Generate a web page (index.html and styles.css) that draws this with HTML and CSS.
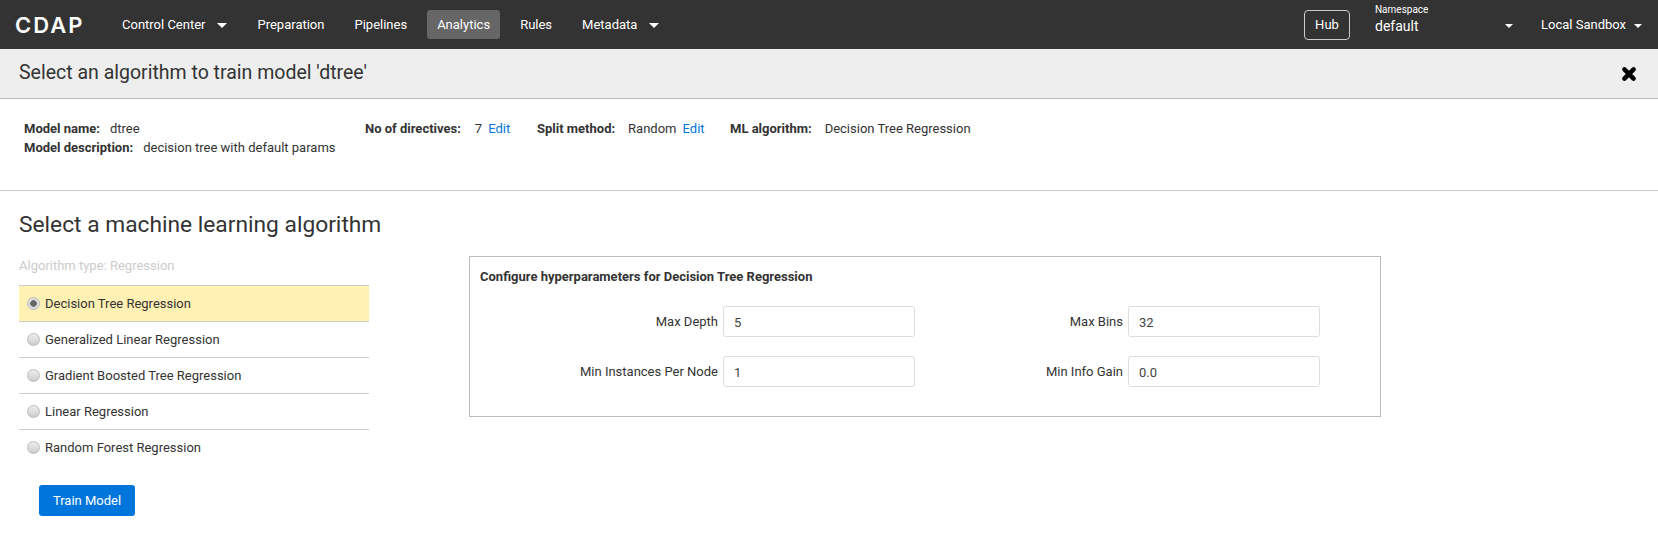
FILE: index.html
```html
<!DOCTYPE html>
<html lang="en">
<head>
  <meta charset="UTF-8">
  <title>CDAP - Analytics</title>
  <link rel="stylesheet" href="styles.css">
</head>
<body>

  <nav class="topbar">
    <span class="logo">CDAP</span>
    <ul class="nav-links">
      <li><a href="#">Control Center<i class="caret caret-wide"></i></a></li>
      <li><a href="#">Preparation</a></li>
      <li><a href="#">Pipelines</a></li>
      <li><a href="#" class="active">Analytics</a></li>
      <li><a href="#">Rules</a></li>
      <li><a href="#">Metadata<i class="caret caret-wide"></i></a></li>
    </ul>
    <a href="#" class="hub">Hub</a>
    <div class="namespace">
      <small>Namespace</small>
      <span>default</span>
      <i class="caret"></i>
    </div>
    <a href="#" class="sandbox">Local Sandbox<i class="caret"></i></a>
  </nav>

  <header class="subheader">
    <h1>Select an algorithm to train model 'dtree'</h1>
    <svg class="close" viewBox="0 0 14 14" aria-label="Close">
      <path d="M3 3 L11 11 M11 3 L3 11" stroke="#000" stroke-width="4" stroke-linecap="round" />
    </svg>
  </header>

  <section class="summary">
    <div class="summary-model">
      <p><b>Model name:</b><span class="val-name">dtree</span></p>
      <p><b>Model description:</b><span class="val-desc">decision tree with default params</span></p>
    </div>
    <p class="summary-directives"><b>No of directives:</b><span class="val-count">7</span><a href="#">Edit</a></p>
    <p class="summary-split"><b>Split method:</b><span class="val-split">Random</span><a href="#">Edit</a></p>
    <p class="summary-algo"><b>ML algorithm:</b><span class="val-algo">Decision Tree Regression</span></p>
  </section>

  <main class="content">
    <h2>Select a machine learning algorithm</h2>
    <div class="columns">
      <div class="algorithms">
        <div class="algo-type">Algorithm type: Regression</div>
        <ul class="algo-list">
          <li class="selected"><i class="radio"></i>Decision Tree Regression</li>
          <li><i class="radio"></i>Generalized Linear Regression</li>
          <li><i class="radio"></i>Gradient Boosted Tree Regression</li>
          <li><i class="radio"></i>Linear Regression</li>
          <li><i class="radio"></i>Random Forest Regression</li>
        </ul>
        <button class="train">Train Model</button>
      </div>

      <div class="params">
        <strong>Configure hyperparameters for Decision Tree Regression</strong>
        <div class="param-grid">
          <label class="param">Max Depth<input type="text" value="5"></label>
          <label class="param">Max Bins<input type="text" value="32"></label>
          <label class="param">Min Instances Per Node<input type="text" value="1"></label>
          <label class="param">Min Info Gain<input type="text" value="0.0"></label>
        </div>
      </div>
    </div>
  </main>

</body>
</html>
```

FILE: styles.css
```css
* {
  box-sizing: border-box;
}
html, body {
  height: 100%;
}
body {
  margin: 0;
  background: #fff;
  color: #333;
  font-family: Roboto, sans-serif;
  font-size: 13px;
  overflow: hidden;
}
a {
  text-decoration: none;
}
p, ul, h1, h2 {
  margin: 0;
  padding: 0;
}
ul {
  list-style: none;
}

/* top bar */
.topbar {
  display: flex;
  align-items: center;
  height: 49px;
  padding-left: 15px;
  background: #333;
  color: #fff;
}
.logo {
  width: 97px;
  font-family: Inter, sans-serif;
  font-size: 22px;
  font-weight: 600;
  letter-spacing: 2px;
}
.nav-links {
  display: flex;
  align-items: center;
}
.nav-links a {
  display: block;
  padding: 0 10px;
  margin-right: 10px;
  height: 29px;
  line-height: 29px;
  color: #fff;
  border-radius: 3px;
  font-size: 13px;
}
.nav-links a.active {
  background: #666;
}
.caret {
  display: inline-block;
  width: 0;
  height: 0;
  margin-left: 8px;
  vertical-align: middle;
  border-left: 4px solid transparent;
  border-right: 4px solid transparent;
  border-top: 4px solid #fff;
}
.caret-wide {
  margin-left: 12px;
  border-left-width: 5px;
  border-right-width: 5px;
  border-top-width: 5px;
}
.hub {
  margin-left: auto;
  width: 46px;
  height: 30px;
  line-height: 28px;
  text-align: center;
  color: #fff;
  border: 1px solid #ccc;
  border-radius: 4px;
}
.namespace {
  position: relative;
  width: 166px;
  height: 49px;
  margin-left: 25px;
  padding-top: 4px;
}
.namespace small {
  display: block;
  font-size: 10px;
  line-height: 12px;
}
.namespace span {
  display: block;
  margin-top: 2px;
  font-size: 14px;
  line-height: 17px;
}
.namespace .caret {
  position: absolute;
  left: 130px;
  top: 24px;
  margin: 0;
}
.sandbox {
  color: #fff;
  margin-right: 16px;
}

/* title strip */
.subheader {
  display: flex;
  justify-content: space-between;
  align-items: center;
  height: 50px;
  padding: 0 21px 2px 19px;
  background: #eee;
  border-bottom: 1px solid #bbb;
}
.subheader h1 {
  font-size: 19.5px;
  font-weight: 400;
}
.close {
  width: 16px;
  height: 16px;
  margin-top: 2px;
}

/* model summary */
.summary {
  display: flex;
  height: 92px;
  padding: 20px 0 0 24px;
  border-bottom: 1px solid #ccc;
  line-height: 19px;
}
.summary b {
  font-weight: 700;
}
.summary a {
  color: #0076dc;
  margin-left: 6px;
}
.summary-model {
  width: 341px;
}
.summary-directives {
  width: 172px;
}
.summary-split {
  width: 193px;
}
.val-name {
  margin-left: 10px;
}
.val-desc {
  margin-left: 10px;
}
.val-count {
  margin-left: 14px;
}
.val-split {
  margin-left: 13px;
}
.val-algo {
  margin-left: 13px;
}

/* main content */
.content {
  padding: 0 19px;
}
.content h2 {
  margin-top: 21px;
  font-size: 22.75px;
  line-height: 26px;
  font-weight: 400;
}
.columns {
  display: flex;
  gap: 100px;
}
.algorithms {
  width: 350px;
}
.algo-type {
  margin-top: 18px;
  height: 29px;
  line-height: 20px;
  font-size: 13px;
  color: #ccc;
}
.algo-list li {
  display: flex;
  align-items: center;
  height: 36px;
  padding-left: 8px;
  border-top: 1px solid #ccc;
}
.algo-list li.selected {
  background: #fff0b3;
}
.radio {
  width: 13px;
  height: 13px;
  margin-right: 5px;
  border: 1px solid #bbb;
  border-radius: 50%;
  background: linear-gradient(#eee, #ccc);
}
.selected .radio {
  background: radial-gradient(circle, #666 0, #666 3px, #ddd 3.5px);
}
.train {
  display: block;
  width: 96px;
  height: 31px;
  margin: 20px 0 0 20px;
  border: none;
  border-radius: 3px;
  background: #0076dc;
  color: #fff;
  font-family: Roboto, sans-serif;
  font-size: 13px;
}
.params {
  width: 912px;
  height: 161px;
  margin-top: 18px;
  padding: 12px 10px;
  border: 1px solid #bbb;
}
.params strong {
  display: block;
  font-size: 13px;
  line-height: 16px;
}
.param-grid {
  display: grid;
  grid-template-columns: 405px 405px;
  row-gap: 19px;
  margin: 21px 0 0 30px;
}
.param {
  display: flex;
  align-items: center;
  justify-content: flex-end;
  gap: 5px;
}
.param input {
  width: 192px;
  height: 31px;
  padding: 2px 10px 0;
  border: 1px solid #ddd;
  border-radius: 3px;
  color: #444;
  font-family: Roboto, sans-serif;
  font-size: 13px;
}
```
